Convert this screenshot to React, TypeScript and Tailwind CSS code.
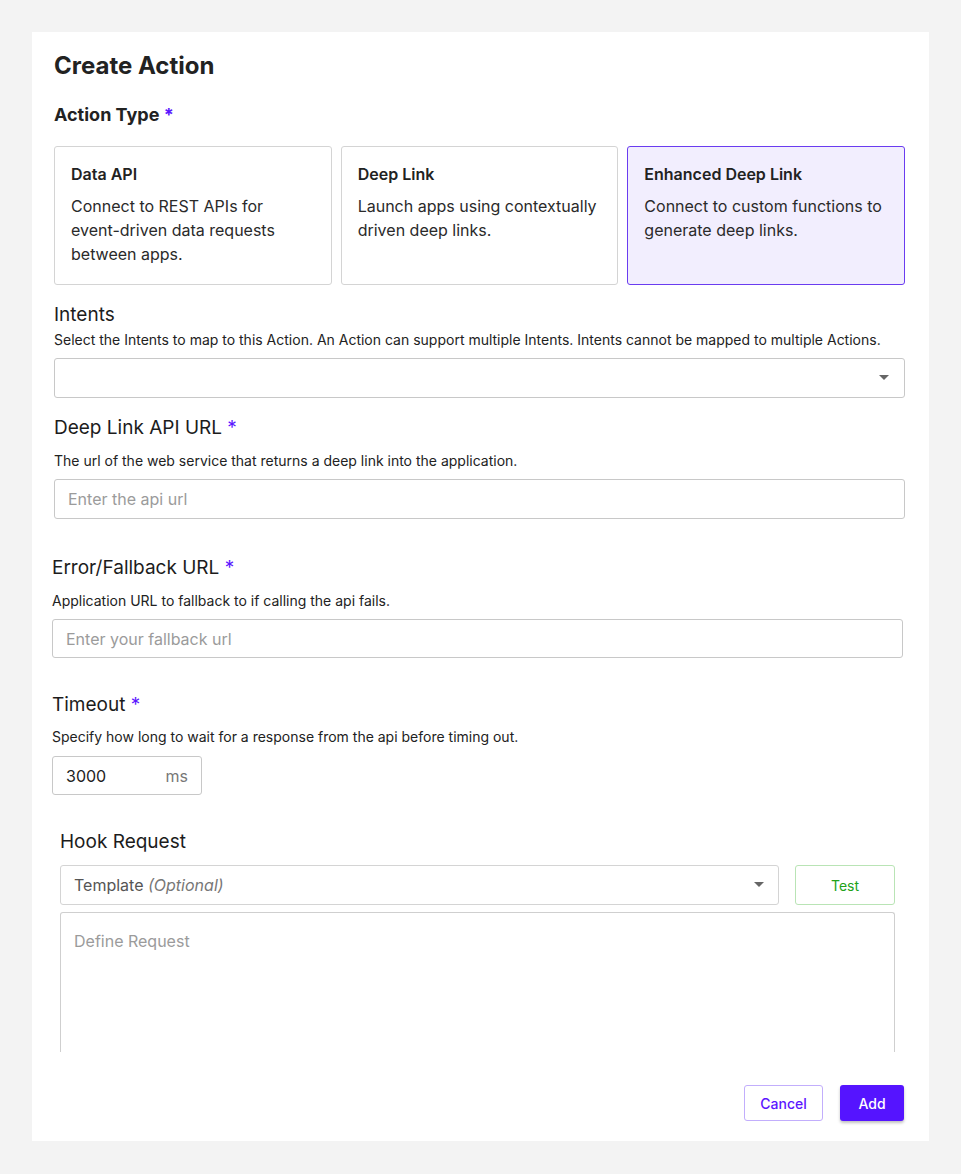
import React from "react"

const Star = () => <span className="text-[#5b16ff]"> *</span>

const Caret = () => (
  <svg width="10" height="6" viewBox="0 0 10 6" className="shrink-0">
    <path d="M0 0 L10 0 L5 5 Z" fill="#666" />
  </svg>
)

const cards = [
  { title: "Data API", desc: "Connect to REST APIs for event-driven data requests between apps.", active: false },
  { title: "Deep Link", desc: "Launch apps using contextually driven deep links.", active: false },
  { title: "Enhanced Deep Link", desc: "Connect to custom functions to generate deep links.", active: true },
]

export default function App() {
  return (
    <div
      className="min-h-[1174px] bg-[#f3f3f3] pt-[32px] pl-[32px] text-[#1c1c1c]"
      style={{ fontFamily: "Inter, 'Noto Sans', sans-serif" }}
    >
      <div className="w-[897px] bg-white pt-[18px] pb-[20px] pl-[22px] pr-[24px]">
        {/* Header */}
        <h1 className="text-[24px] leading-[32px] font-bold text-[#222]">Create Action</h1>
        <div className="mt-[19px] text-[18px] leading-[28px] font-bold text-[#222]">
          Action Type
          <Star />
        </div>

        {/* Action type cards */}
        <div className="mt-[17px] flex gap-[9px]">
          {cards.map((c) => (
            <div
              key={c.title}
              className={`h-[139px] flex-1 rounded-[3px] border px-4 pt-[15px] ${
                c.active ? "border-[#6a3cf0] bg-[#f2eefe]" : "border-[#d4d4d4] bg-white"
              }`}
            >
              <div className="text-[16px] leading-[24px] font-semibold text-[#222]">{c.title}</div>
              <div className="mt-[8px] text-[16px] leading-[24px] text-[#2a2a2a]">{c.desc}</div>
            </div>
          ))}
        </div>

        {/* Intents */}
        <div className="mt-[18px] text-[19px] leading-[24px]">Intents</div>
        <div className="mt-[3px] text-[14px] leading-[20px] text-[#222]">
          Select the Intents to map to this Action. An Action can support multiple Intents. Intents cannot be mapped to multiple Actions.
        </div>
        <div className="mt-[8px] flex h-[40px] items-center justify-end rounded-[3px] border border-[#c8c8c8] pr-[15px]">
          <Caret />
        </div>

        {/* Deep link url */}
        <div className="mt-[16px] text-[19px] leading-[28px]">
          Deep Link API URL
          <Star />
        </div>
        <div className="mt-[9px] text-[14px] leading-[20px] text-[#222]">
          The url of the web service that returns a deep link into the application.
        </div>
        <div className="mt-[8px] flex h-[40px] items-center rounded-[3px] border border-[#c8c8c8] px-[13px] text-[16px] text-[#9b9b9b]">
          Enter the api url
        </div>

        {/* Fallback + timeout */}
        <div className="ml-[-2px] mr-[2px]">
          <div className="mt-[35px] text-[19px] leading-[28px]">
            Error/Fallback URL
            <Star />
          </div>
          <div className="mt-[9px] text-[14px] leading-[20px] text-[#222]">
            Application URL to fallback to if calling the api fails.
          </div>
          <div className="mt-[8px] flex h-[39px] items-center rounded-[3px] border border-[#c8c8c8] px-[13px] text-[16px] text-[#9b9b9b]">
            Enter your fallback url
          </div>

          <div className="mt-[33px] text-[19px] leading-[28px]">
            Timeout
            <Star />
          </div>
          <div className="mt-[8px] text-[14px] leading-[20px] text-[#222]">
            Specify how long to wait for a response from the api before timing out.
          </div>
          <div className="mt-[9px] flex h-[39px] w-[150px] items-center justify-between rounded-[3px] border border-[#c8c8c8] pl-[13px] pr-[13px] text-[16px]">
            <span className="text-[#222]">3000</span>
            <span className="text-[#777]">ms</span>
          </div>
        </div>

        {/* Hook request */}
        <div className="ml-[6px] mr-[10px]">
          <div className="mt-[33px] text-[19px] leading-[28px]">Hook Request</div>
          <div className="mt-[9px] flex gap-[16px]">
            <div className="flex h-[40px] flex-1 items-center justify-between rounded-[3px] border border-[#d4d4d4] pl-[13px] pr-[14px] text-[16px] text-[#555]">
              <span>
                Template <span className="italic text-[#777]">(Optional)</span>
              </span>
              <Caret />
            </div>
            <button className="h-[40px] w-[100px] rounded-[3px] border border-[#b9e4b5] text-[14px] text-[#22a219]">
              Test
            </button>
          </div>
          <div className="mt-[7px] h-[140px] rounded-t-[3px] border border-b-0 border-[#cfcfcf] px-[13px] pt-[16px] text-[16px] text-[#9b9b9b]">
            Define Request
          </div>
        </div>

        {/* Footer */}
        <div className="mt-[33px] mr-[1px] flex justify-end gap-[17px]">
          <button className="h-[36px] w-[79px] rounded-[3px] border border-[#c2aefc] text-[14px] font-medium text-[#5b16ff]">
            Cancel
          </button>
          <button className="h-[36px] w-[64px] rounded-[3px] bg-[#5514ff] text-[14px] font-medium text-white shadow-[0_2px_3px_rgba(0,0,0,0.25)]">
            Add
          </button>
        </div>
      </div>
    </div>
  )
}
